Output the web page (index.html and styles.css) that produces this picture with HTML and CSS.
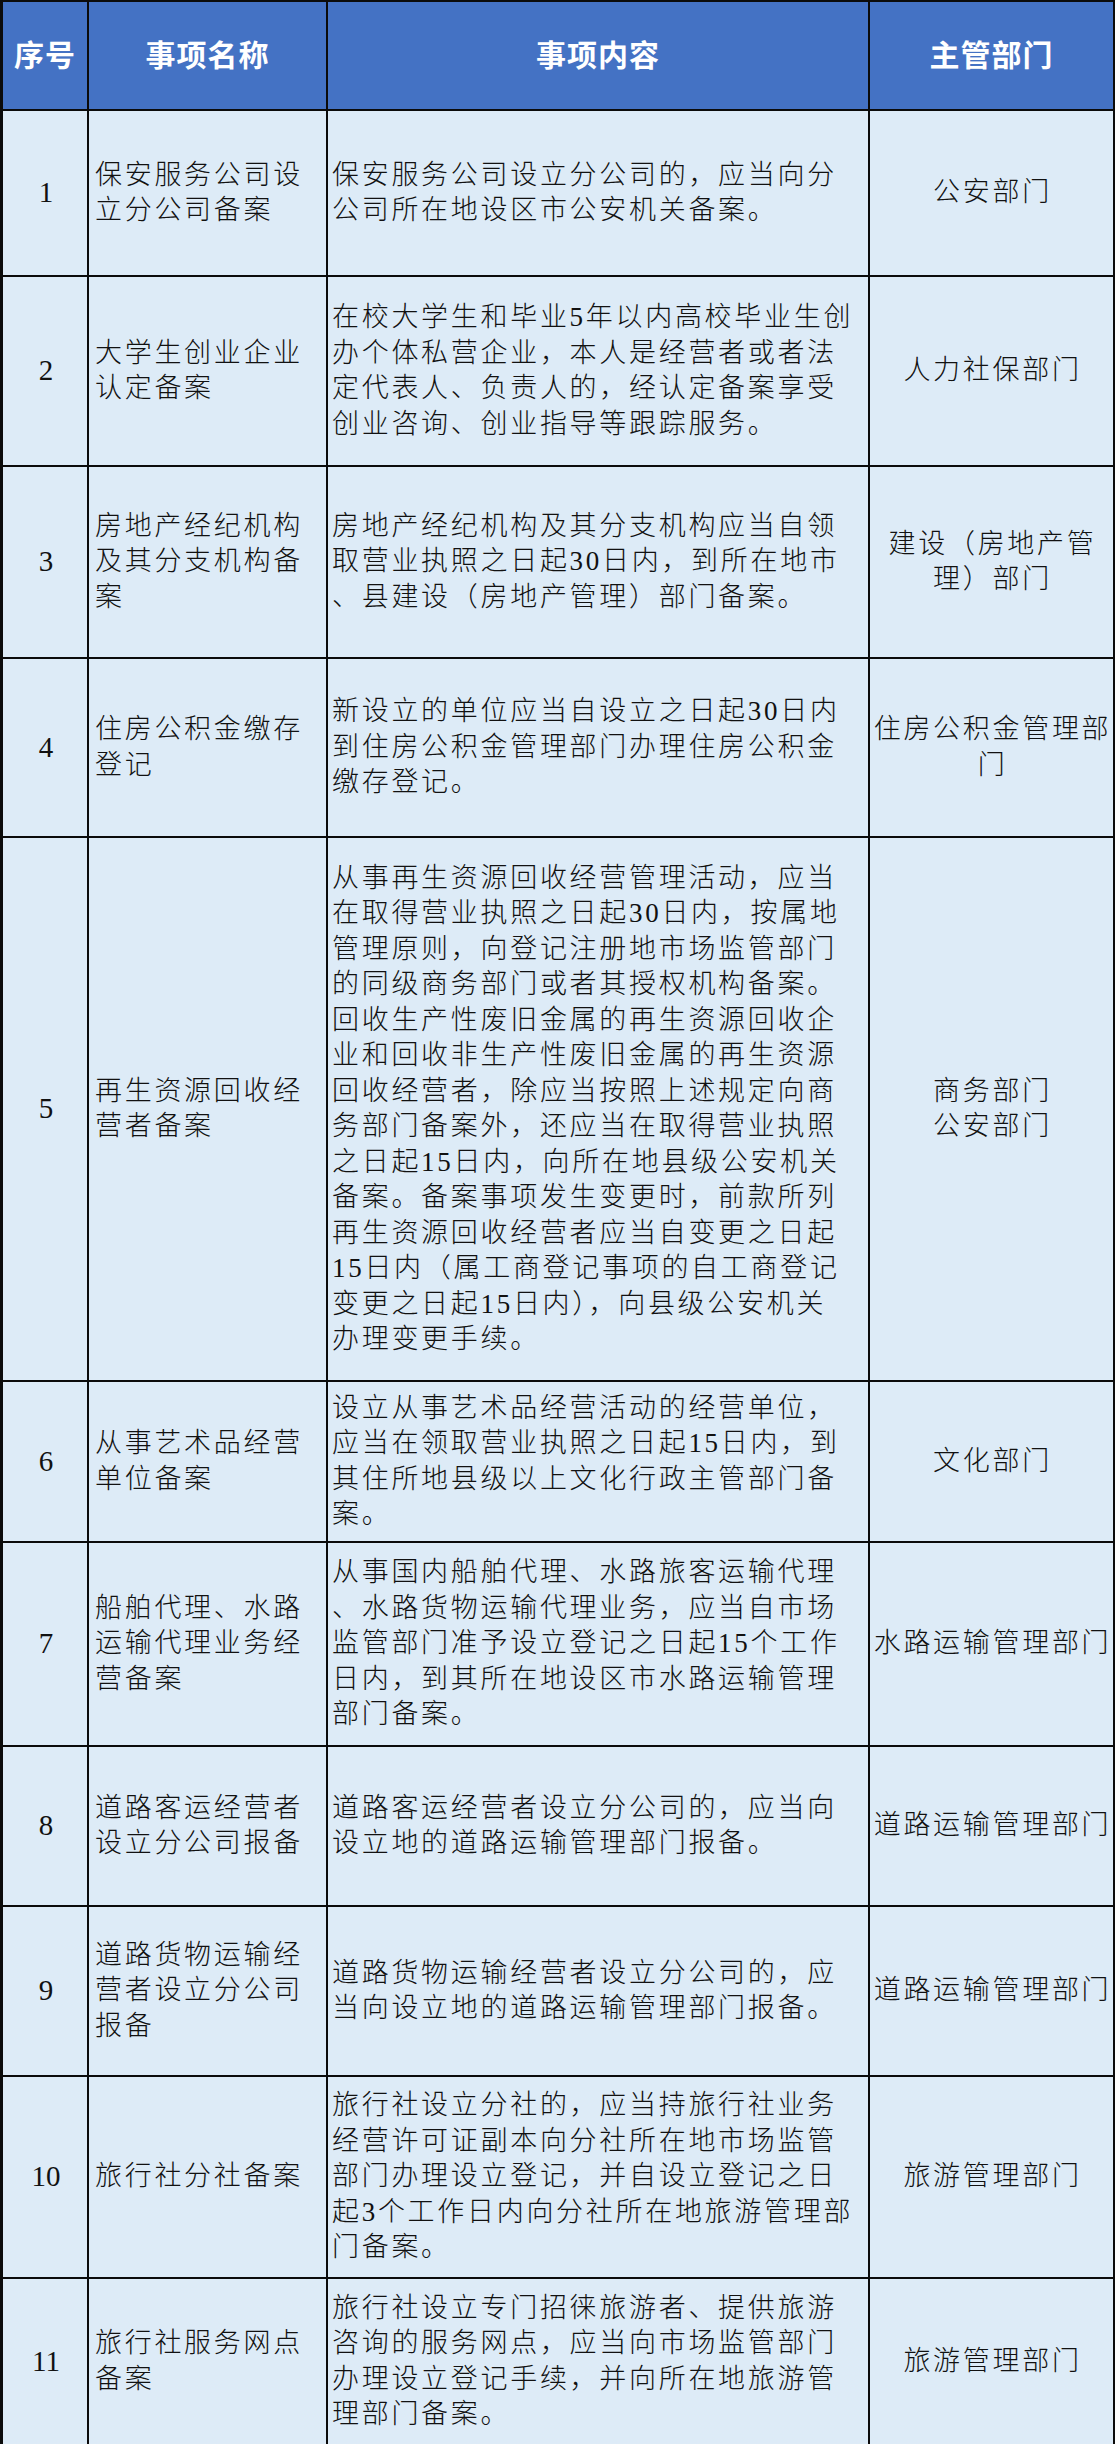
FILE: index.html
```html
<!DOCTYPE html>
<html lang="zh-CN">
<head>
<meta charset="utf-8">
<title>备案事项</title>
<link rel="stylesheet" href="styles.css">
</head>
<body>
<div class="table">
  <div class="cell head first top">序号</div>
  <div class="cell head top">事项名称</div>
  <div class="cell head top">事项内容</div>
  <div class="cell head top">主管部门</div>

  <div class="cell num first">1</div>
  <div class="cell name">保安服务公司设<br>立分公司备案</div>
  <div class="cell content">保安服务公司设立分公司的，应当向分<br>公司所在地设区市公安机关备案。</div>
  <div class="cell dept">公安部门</div>

  <div class="cell num first">2</div>
  <div class="cell name">大学生创业企业<br>认定备案</div>
  <div class="cell content">在校大学生和毕业5年以内高校毕业生创<br>办个体私营企业，本人是经营者或者法<br>定代表人、负责人的，经认定备案享受<br>创业咨询、创业指导等跟踪服务。</div>
  <div class="cell dept">人力社保部门</div>

  <div class="cell num first">3</div>
  <div class="cell name">房地产经纪机构<br>及其分支机构备<br>案</div>
  <div class="cell content">房地产经纪机构及其分支机构应当自领<br>取营业执照之日起30日内，到所在地市<br>、县建设（房地产管理）部门备案。</div>
  <div class="cell dept">建设（房地产管<br>理）部门</div>

  <div class="cell num first">4</div>
  <div class="cell name">住房公积金缴存<br>登记</div>
  <div class="cell content">新设立的单位应当自设立之日起30日内<br>到住房公积金管理部门办理住房公积金<br>缴存登记。</div>
  <div class="cell dept">住房公积金管理部<br>门</div>

  <div class="cell num first">5</div>
  <div class="cell name">再生资源回收经<br>营者备案</div>
  <div class="cell content">从事再生资源回收经营管理活动，应当<br>在取得营业执照之日起30日内，按属地<br>管理原则，向登记注册地市场监管部门<br>的同级商务部门或者其授权机构备案。<br>回收生产性废旧金属的再生资源回收企<br>业和回收非生产性废旧金属的再生资源<br>回收经营者，除应当按照上述规定向商<br>务部门备案外，还应当在取得营业执照<br>之日起15日内，向所在地县级公安机关<br>备案。备案事项发生变更时，前款所列<br>再生资源回收经营者应当自变更之日起<br>15日内（属工商登记事项的自工商登记<br>变更之日起15日内），向县级公安机关<br>办理变更手续。</div>
  <div class="cell dept">商务部门<br>公安部门</div>

  <div class="cell num first">6</div>
  <div class="cell name">从事艺术品经营<br>单位备案</div>
  <div class="cell content">设立从事艺术品经营活动的经营单位，<br>应当在领取营业执照之日起15日内，到<br>其住所地县级以上文化行政主管部门备<br>案。</div>
  <div class="cell dept">文化部门</div>

  <div class="cell num first">7</div>
  <div class="cell name">船舶代理、水路<br>运输代理业务经<br>营备案</div>
  <div class="cell content">从事国内船舶代理、水路旅客运输代理<br>、水路货物运输代理业务，应当自市场<br>监管部门准予设立登记之日起15个工作<br>日内，到其所在地设区市水路运输管理<br>部门备案。</div>
  <div class="cell dept">水路运输管理部门</div>

  <div class="cell num first">8</div>
  <div class="cell name">道路客运经营者<br>设立分公司报备</div>
  <div class="cell content">道路客运经营者设立分公司的，应当向<br>设立地的道路运输管理部门报备。</div>
  <div class="cell dept">道路运输管理部门</div>

  <div class="cell num first">9</div>
  <div class="cell name">道路货物运输经<br>营者设立分公司<br>报备</div>
  <div class="cell content">道路货物运输经营者设立分公司的，应<br>当向设立地的道路运输管理部门报备。</div>
  <div class="cell dept">道路运输管理部门</div>

  <div class="cell num first">10</div>
  <div class="cell name">旅行社分社备案</div>
  <div class="cell content">旅行社设立分社的，应当持旅行社业务<br>经营许可证副本向分社所在地市场监管<br>部门办理设立登记，并自设立登记之日<br>起3个工作日内向分社所在地旅游管理部<br>门备案。</div>
  <div class="cell dept">旅游管理部门</div>

  <div class="cell num first last">11</div>
  <div class="cell name last">旅行社服务网点<br>备案</div>
  <div class="cell content last">旅行社设立专门招徕旅游者、提供旅游<br>咨询的服务网点，应当向市场监管部门<br>办理设立登记手续，并向所在地旅游管<br>理部门备案。</div>
  <div class="cell dept last">旅游管理部门</div>
</div>
</body>
</html>
```

FILE: styles.css
```css
html, body {
  margin: 0;
  padding: 0;
  background: #ffffff;
}

.table {
  display: grid;
  grid-template-columns: 89px 239px 542px 245px;
  grid-template-rows: 111px 166px 190px 192px 179px 544px 161px 204px 160px 170px 202px 165px;
  width: 1115px;
  font-family: "Liberation Serif", "Noto Sans CJK SC", serif;
  color: #111111;
}

.cell {
  box-sizing: border-box;
  border-right: 2px solid #0b0b0b;
  border-bottom: 2px solid #0b0b0b;
  background: #ddebf7;
  display: flex;
  align-items: center;
  font-size: 27px;
  font-weight: 300;
  line-height: 35.5px;
  letter-spacing: 2.7px;
  white-space: nowrap;
}

.cell.first {
  border-left: 3px solid #0b0b0b;
}

.cell.top {
  border-top: 2px solid #0b0b0b;
}

.cell.last {
  border-bottom: none;
}

.head {
  background: #4472c4;
  color: #ffffff;
  font-family: "Noto Sans CJK SC", sans-serif;
  font-weight: 700;
  font-size: 30px;
  letter-spacing: 1px;
  justify-content: center;
  text-align: center;
  padding-bottom: 4px;
}

.num {
  justify-content: center;
  text-align: center;
  font-size: 29px;
  letter-spacing: 0;
  padding-left: 2px;
}

.name {
  padding-left: 6px;
}

.content {
  padding-left: 4px;
}

.dept {
  justify-content: center;
  text-align: center;
  padding-left: 2px;
}
```
